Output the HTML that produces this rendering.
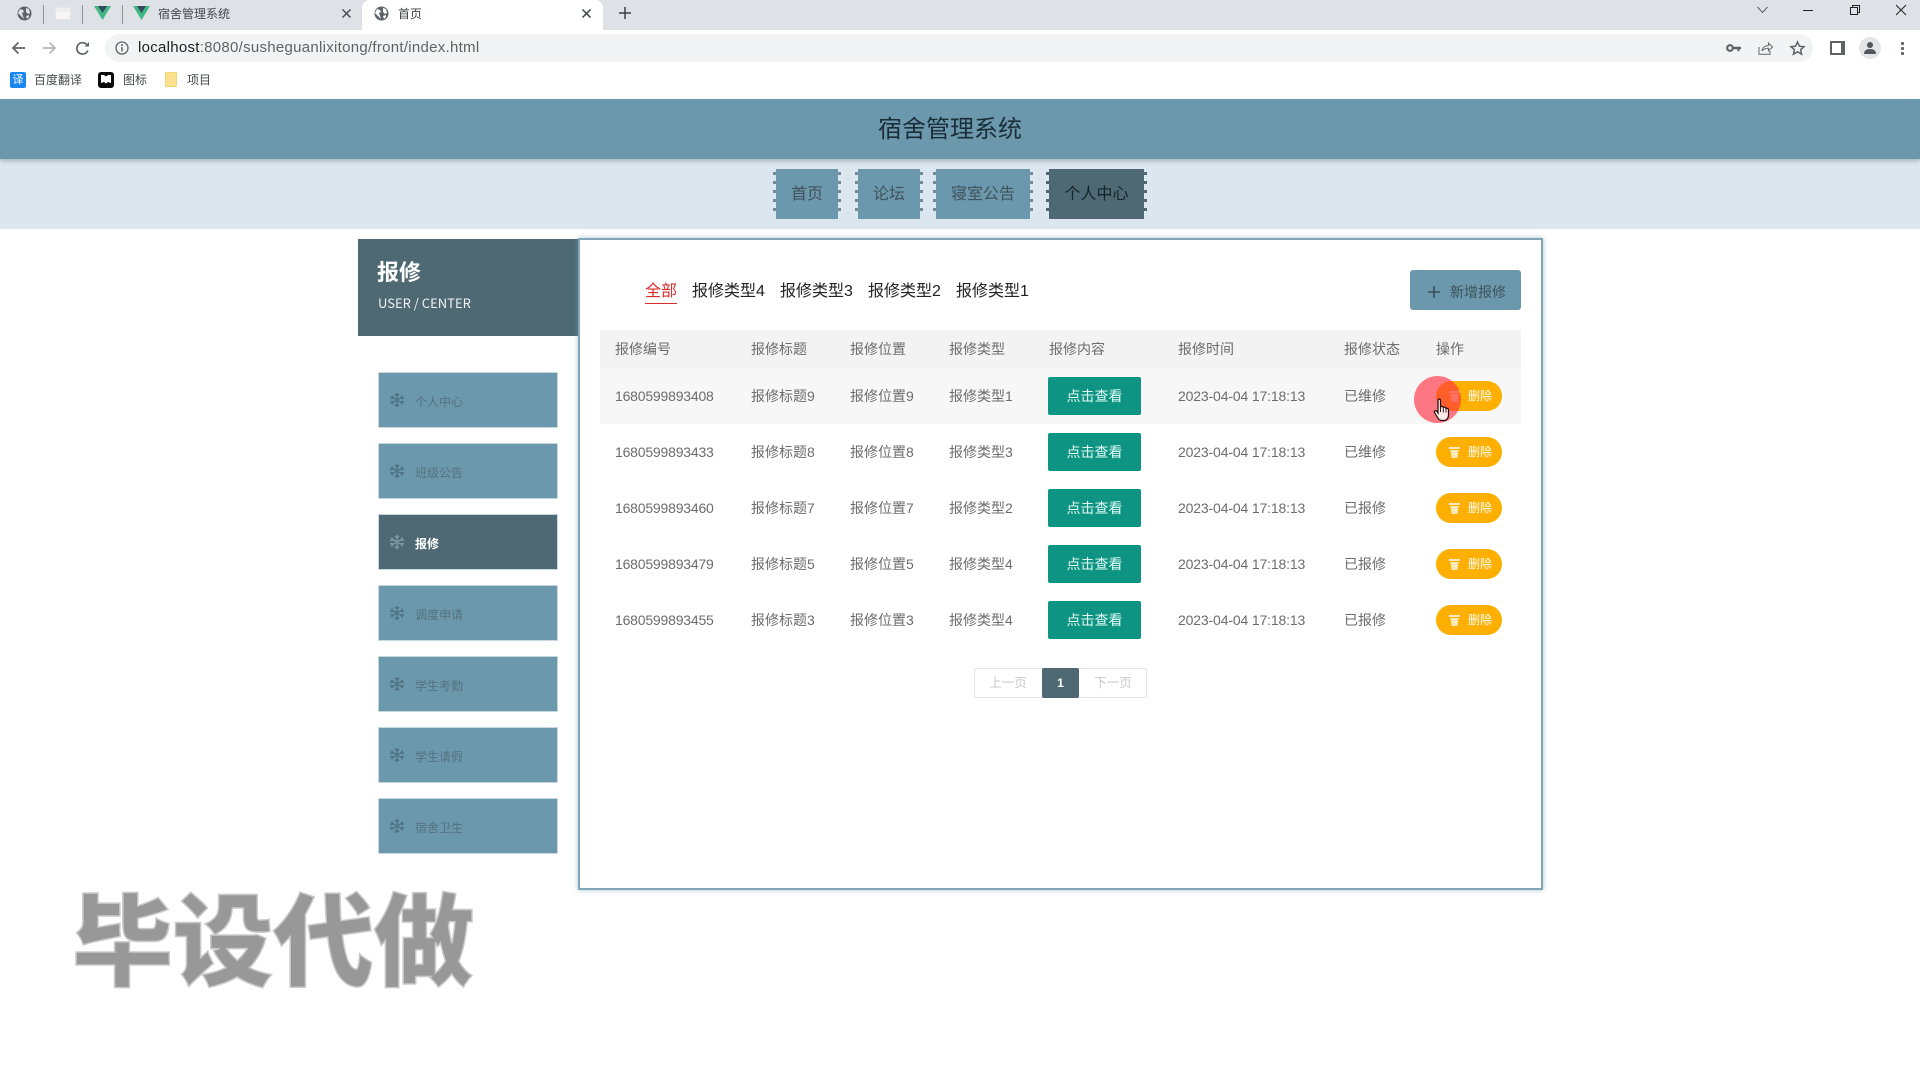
<!DOCTYPE html>
<html lang="zh"><head><meta charset="utf-8"><title>首页</title>
<style>
*{box-sizing:border-box;margin:0;padding:0}
html,body{width:1920px;height:1072px;overflow:hidden;background:#fff}
body{position:relative;font-family:"Liberation Sans","Noto Sans CJK SC",sans-serif;color:#666}
.a{position:absolute;white-space:nowrap}
svg{position:absolute;overflow:visible}
.sep{position:absolute;top:5px;width:1px;height:19px;background:#8f9398}
.nav{position:absolute;top:169px;height:50px;background:#6b98ac;color:#3f525c;font-size:16px;line-height:51px;text-align:center}
.nav:before,.nav:after{content:"";position:absolute;top:3px;width:3px;height:44px;background:repeating-linear-gradient(to bottom,#6f8c99 0 3px,transparent 3px 9px)}
.nav:before{left:-3px}.nav:after{right:-3px}
.nav.on{background:#4e6973;color:#15242c}
.nav.on:before,.nav.on:after{background:repeating-linear-gradient(to bottom,#4e6973 0 3px,transparent 3px 9px)}
.mi{position:absolute;left:378px;width:180px;height:56px;background:#6b98ac;border:1px solid #c8d8e0;color:#557280;font-size:12px}
.mi b{position:absolute;left:36px;top:20px;font-weight:400;line-height:18px}
.mi.on{background:#4e6973;color:#fff}.mi.on b{font-weight:700}
.mi svg{left:11px;top:20px}
.r{position:absolute;left:600px;width:921px;height:56px;font-size:14px;color:#6c6c6c}
.r span{position:absolute;top:19px;line-height:18px;white-space:nowrap}
.r .id{left:15px;letter-spacing:-.2px}.r .t{left:151px}.r .p{left:250px}.r .k{left:349px}.r .d{left:578px;letter-spacing:-.15px}.r .s{left:744px}
.r .v{left:448px;top:9px;width:93px;height:38px;background:#0d9483;border-radius:2px;color:#e4fbf4;line-height:38px;text-align:center}
.r .x{left:836px;top:13px;width:66px;height:30px;background:#ffaf00;border-radius:15px;color:#fff;font-size:12px;line-height:31px;padding-left:32px}
.r svg{left:849px;top:23px}
.h{position:absolute;top:340px;font-size:14px;color:#6c6c6c;line-height:18px}
.tb{position:absolute;top:280px;font-size:16px;color:#222;line-height:23px}
</style></head><body>

<!-- tab strip -->
<div class="a" style="left:0;top:0;width:1920px;height:30px;background:#dee1e6"></div>
<div class="a" style="left:362px;top:0;width:241px;height:30px;background:#fff;border-radius:8px 8px 0 0"></div>
<svg style="left:17px;top:6px" width="15" height="15" viewBox="0 0 15 15"><circle cx="7.500" cy="7.500" r="7" fill="#5f6368"/><path d="M3 3l3 1 1 2-2 1 1 3 1 3-3-3-3-3zM9 2l3 1 1 4-2 1-2-2zM9 10l3-1 0 2-2 2z" fill="#dee1e6"/></svg>
<div class="sep" style="left:43px"></div>
<div class="a" style="left:55px;top:7px;width:16px;height:13px;background:linear-gradient(#eceef0 0 4px,#f5f5f5 4px);border:1px solid #e4e6ea"></div>
<div class="sep" style="left:82px"></div>
<svg style="left:94px;top:6px" width="17" height="14" viewBox="0 0 17 14"><path d="M0 0h17L8.500 14z" fill="#41b883"/><path d="M4 0h9L8.500 7z" fill="#35495e"/></svg>
<div class="sep" style="left:122px"></div>
<svg style="left:133px;top:6px" width="17" height="14" viewBox="0 0 17 14"><path d="M0 0h17L8.500 14z" fill="#41b883"/><path d="M4 0h9L8.500 7z" fill="#35495e"/></svg>
<div class="a" style="left:158px;top:5px;font-size:12px;line-height:18px;color:#45484c">宿舍管理系统</div>
<svg style="left:342px;top:9px" width="9" height="9" viewBox="0 0 9 9"><path d="M.5.500l8 8M8.500.500l-8 8" stroke="#4a4d51" stroke-width="1.500"/></svg>
<svg style="left:374px;top:6px" width="15" height="15" viewBox="0 0 15 15"><circle cx="7.500" cy="7.500" r="7" fill="#5f6368"/><path d="M3 3l3 1 1 2-2 1 1 3 1 3-3-3-3-3zM9 2l3 1 1 4-2 1-2-2zM9 10l3-1 0 2-2 2z" fill="#fff"/></svg>
<div class="a" style="left:398px;top:5px;font-size:12px;line-height:18px;color:#3c4043">首页</div>
<svg style="left:582px;top:9px" width="9" height="9" viewBox="0 0 9 9"><path d="M.5.500l8 8M8.500.500l-8 8" stroke="#3c4043" stroke-width="1.500"/></svg>
<svg style="left:619px;top:7px" width="12" height="12" viewBox="0 0 12 12"><path d="M6 0v12M0 6h12" stroke="#3c4043" stroke-width="1.500"/></svg>
<svg style="left:1757px;top:6px" width="11" height="8" viewBox="0 0 11 8"><path d="M.5 1l5 5.500L10.500 1" fill="none" stroke="#5a5e63" stroke-width="1"/></svg>
<div class="a" style="left:1803px;top:10px;width:10px;height:1px;background:#222"></div>
<svg style="left:1850px;top:5px" width="10" height="10" viewBox="0 0 10 10"><path d="M.5 2.500h7v7h-7zM2.500 2.500V.5h7v7h-2" fill="none" stroke="#222"/></svg>
<svg style="left:1896px;top:5px" width="10" height="10" viewBox="0 0 10 10"><path d="M0 0l10 10M10 0L0 10" stroke="#222"/></svg>

<!-- toolbar -->
<svg style="left:11px;top:41px" width="14" height="14" viewBox="0 0 14 14"><path d="M14 7H2M7.500 1.500L2 7l5.500 5.500" fill="none" stroke="#5f6368" stroke-width="1.700"/></svg>
<svg style="left:43px;top:41px" width="14" height="14" viewBox="0 0 14 14"><path d="M0 7h12M6.500 1.500L12 7l-5.500 5.500" fill="none" stroke="#b6b8bb" stroke-width="1.700"/></svg>
<svg style="left:75px;top:41px" width="15" height="15" viewBox="0 0 15 15"><path d="M12.800 9.500A5.700 5.700 0 1 1 11.500 3.300" fill="none" stroke="#5f6368" stroke-width="1.700"/><path d="M9.500 5.500H14V1z" fill="#5f6368"/></svg>
<div class="a" style="left:105px;top:34px;width:1708px;height:28px;background:#f1f3f4;border-radius:14px"></div>
<svg style="left:115px;top:41px" width="14" height="14" viewBox="0 0 14 14"><circle cx="7" cy="7" r="6" fill="none" stroke="#5f6368" stroke-width="1.300"/><path d="M7 6v4.500" stroke="#5f6368" stroke-width="1.500"/><circle cx="7" cy="4" r="1" fill="#5f6368"/></svg>
<div class="a" style="left:138px;top:38px;font-size:15px;letter-spacing:.28px;line-height:20px;color:#5f6368"><span style="color:#202124">localhost</span>:8080/susheguanlixitong/front/index.html</div>
<svg style="left:1726px;top:43px" width="15" height="10" viewBox="0 0 15 10"><circle cx="4" cy="5" r="2.800" fill="none" stroke="#5f6368" stroke-width="2.200"/><path d="M6 3.800h9v2.500h-1.500v2h-2v-2H6z" fill="#5f6368"/></svg>
<svg style="left:1758px;top:41px" width="15" height="14" viewBox="0 0 15 14"><path d="M1 6v7.300h11V10" fill="none" stroke="#6f7276" stroke-width="1.100"/><path d="M4 10c.5-3.500 3-5.500 6.500-5.500V2l4 4-4 3.800V7.300C8 7.300 5.500 8 4 10z" fill="none" stroke="#6f7276" stroke-width="1.100"/></svg>
<svg style="left:1790px;top:41px" width="15" height="14" viewBox="0 0 15 14"><path d="M7.500 1l1.900 4.200 4.600.5-3.400 3 1 4.500-4.100-2.400-4.100 2.400 1-4.500-3.400-3 4.600-.5z" fill="none" stroke="#5f6368" stroke-width="1.500"/></svg>
<div class="a" style="left:1830px;top:41px;width:15px;height:14px;background:linear-gradient(to right,#fff 0 9px,#5f6368 9px);border:2px solid #5f6368"></div>
<div class="a" style="left:1859px;top:37px;width:22px;height:22px;border-radius:50%;background:#e3e5e8"></div>
<svg style="left:1863px;top:42px" width="14" height="12" viewBox="0 0 14 12"><circle cx="7" cy="3" r="3" fill="#52565c"/><path d="M1 12c0-3.500 2.500-5 6-5s6 1.500 6 5z" fill="#52565c"/></svg>
<div class="a" style="left:1901px;top:42px;width:3px;height:13px;background:radial-gradient(circle at 1.500px 1.500px,#5f6368 1.500px,transparent 1.600px) 0 0/3px 5px"></div>

<!-- bookmarks -->
<div class="a" style="left:10px;top:72px;width:16px;height:16px;background:#1a87f0;border-radius:2px;color:#fff;font-size:11px;line-height:16px;text-align:center">译</div>
<div class="a" style="left:34px;top:71px;font-size:12px;line-height:18px;color:#45484c">百度翻译</div>
<div class="a" style="left:98px;top:72px;width:16px;height:16px;background:#0a0a0a;border-radius:3px"></div>
<svg style="left:101px;top:75px" width="10" height="10" viewBox="0 0 10 10"><path d="M0 0h3l2 1.500L7 0h3v8L7 7 5 8.500 3 7 0 8z" fill="#fff"/></svg>
<div class="a" style="left:123px;top:71px;font-size:12px;line-height:18px;color:#45484c">图标</div>
<div class="a" style="left:165px;top:72px;width:12px;height:15px;background:#fbe08d;border:1px solid #f4d57a;border-radius:1px"></div>
<div class="a" style="left:187px;top:71px;font-size:12px;line-height:18px;color:#45484c">项目</div>

<!-- header -->
<div class="a" style="left:0;top:99px;width:1920px;height:60px;background:#6b98ac;box-shadow:0 2px 4px rgba(60,90,110,.35);z-index:2"></div>
<div class="a" style="left:878px;top:100px;z-index:3;font-size:24px;line-height:60px;color:#1b2d38">宿舍管理系统</div>
<div class="a" style="left:0;top:159px;width:1920px;height:70px;background:#dbe6ef"></div>
<div class="nav" style="left:776px;width:62px">首页</div>
<div class="nav" style="left:858px;width:62px">论坛</div>
<div class="nav" style="left:936px;width:94px">寝室公告</div>
<div class="nav on" style="left:1049px;width:95px">个人中心</div>

<!-- sidebar -->
<div class="a" style="left:358px;top:239px;width:221px;height:97px;background:#4e6973"></div>
<div class="a" style="left:377px;top:258px;font-size:22px;font-weight:700;line-height:30px;color:#fff">报修</div>
<div class="a" style="left:378px;top:293px;font-family:'Noto Sans CJK SC',sans-serif;font-size:13px;line-height:20px;color:#f0f4f5">USER / CENTER</div>

<div class="mi" style="top:372px"><svg width="14" height="14" viewBox="0 0 14 14"><path d="M7 0v14M1 3.500l12 7M13 3.500l-12 7M5 1l2 2 2-2M5 13l2-2 2 2M0 5.500l2.700-.3L2 2.500M14 5.500l-2.700-.3.700-2.700M0 8.500l2.700.3-.7 2.700M14 8.500l-2.700.3.700 2.700" fill="none" stroke="#4f7485" stroke-width="1.400"/></svg><b>个人中心</b></div>
<div class="mi" style="top:443px"><svg width="14" height="14" viewBox="0 0 14 14"><path d="M7 0v14M1 3.500l12 7M13 3.500l-12 7M5 1l2 2 2-2M5 13l2-2 2 2M0 5.500l2.700-.3L2 2.500M14 5.500l-2.700-.3.700-2.700M0 8.500l2.700.3-.7 2.700M14 8.500l-2.700.3.700 2.700" fill="none" stroke="#4f7485" stroke-width="1.400"/></svg><b>班级公告</b></div>
<div class="mi on" style="top:514px"><svg width="14" height="14" viewBox="0 0 14 14"><path d="M7 0v14M1 3.500l12 7M13 3.500l-12 7M5 1l2 2 2-2M5 13l2-2 2 2M0 5.500l2.700-.3L2 2.500M14 5.500l-2.700-.3.700-2.700M0 8.500l2.700.3-.7 2.700M14 8.500l-2.700.3.700 2.700" fill="none" stroke="#7d98a3" stroke-width="1.400"/></svg><b>报修</b></div>
<div class="mi" style="top:585px"><svg width="14" height="14" viewBox="0 0 14 14"><path d="M7 0v14M1 3.500l12 7M13 3.500l-12 7M5 1l2 2 2-2M5 13l2-2 2 2M0 5.500l2.700-.3L2 2.500M14 5.500l-2.700-.3.700-2.700M0 8.500l2.700.3-.7 2.700M14 8.500l-2.700.3.700 2.700" fill="none" stroke="#4f7485" stroke-width="1.400"/></svg><b>调度申请</b></div>
<div class="mi" style="top:656px"><svg width="14" height="14" viewBox="0 0 14 14"><path d="M7 0v14M1 3.500l12 7M13 3.500l-12 7M5 1l2 2 2-2M5 13l2-2 2 2M0 5.500l2.700-.3L2 2.500M14 5.500l-2.700-.3.700-2.700M0 8.500l2.700.3-.7 2.700M14 8.500l-2.700.3.700 2.700" fill="none" stroke="#4f7485" stroke-width="1.400"/></svg><b>学生考勤</b></div>
<div class="mi" style="top:727px"><svg width="14" height="14" viewBox="0 0 14 14"><path d="M7 0v14M1 3.500l12 7M13 3.500l-12 7M5 1l2 2 2-2M5 13l2-2 2 2M0 5.500l2.700-.3L2 2.500M14 5.500l-2.700-.3.700-2.700M0 8.500l2.700.3-.7 2.700M14 8.500l-2.700.3.700 2.700" fill="none" stroke="#4f7485" stroke-width="1.400"/></svg><b>学生请假</b></div>
<div class="mi" style="top:798px"><svg width="14" height="14" viewBox="0 0 14 14"><path d="M7 0v14M1 3.500l12 7M13 3.500l-12 7M5 1l2 2 2-2M5 13l2-2 2 2M0 5.500l2.700-.3L2 2.500M14 5.500l-2.700-.3.700-2.700M0 8.500l2.700.3-.7 2.700M14 8.500l-2.700.3.700 2.700" fill="none" stroke="#4f7485" stroke-width="1.400"/></svg><b>宿舍卫生</b></div>

<!-- main panel -->
<div class="a" style="left:578px;top:238px;width:965px;height:652px;background:#fff;border:2px solid #7fa5b6;box-shadow:0 0 5px rgba(100,150,180,.55)"></div>

<div class="tb" style="left:645px;color:#d92b2b;border-bottom:1px solid #d92b2b;height:24px">全部</div>
<div class="tb" style="left:692px">报修类型4</div>
<div class="tb" style="left:780px">报修类型3</div>
<div class="tb" style="left:868px">报修类型2</div>
<div class="tb" style="left:956px">报修类型1</div>

<div class="a" style="left:1410px;top:270px;width:111px;height:40px;background:#6b98ac;border-radius:3px;color:#3d525d;font-size:14px;line-height:44px;padding-left:40px">新增报修</div>
<svg style="left:1428px;top:286px" width="12" height="12" viewBox="0 0 12 12"><path d="M6 0v12M0 6h12" stroke="#2f424c" stroke-width="1.300"/></svg>

<div class="a" style="left:600px;top:330px;width:921px;height:38px;background:#f3f3f4"></div>
<div class="h" style="left:615px">报修编号</div>
<div class="h" style="left:751px">报修标题</div>
<div class="h" style="left:850px">报修位置</div>
<div class="h" style="left:949px">报修类型</div>
<div class="h" style="left:1049px">报修内容</div>
<div class="h" style="left:1178px">报修时间</div>
<div class="h" style="left:1344px">报修状态</div>
<div class="h" style="left:1436px">操作</div>

<div class="r" style="top:368px;background:#f7f7f8"><span class="id">1680599893408</span><span class="t">报修标题9</span><span class="p">报修位置9</span><span class="k">报修类型1</span><span class="v">点击查看</span><span class="d">2023-04-04 17:18:13</span><span class="s">已维修</span><span class="x">删除</span><svg width="11" height="11" viewBox="0 0 11 11"><path d="M0 0h11v2H0zM1.500 3h8l-1 8h-6z" fill="#ffe9b8"/></svg></div>
<div class="r" style="top:424px"><span class="id">1680599893433</span><span class="t">报修标题8</span><span class="p">报修位置8</span><span class="k">报修类型3</span><span class="v">点击查看</span><span class="d">2023-04-04 17:18:13</span><span class="s">已维修</span><span class="x">删除</span><svg width="11" height="11" viewBox="0 0 11 11"><path d="M0 0h11v2H0zM1.500 3h8l-1 8h-6z" fill="#ffe9b8"/></svg></div>
<div class="r" style="top:480px"><span class="id">1680599893460</span><span class="t">报修标题7</span><span class="p">报修位置7</span><span class="k">报修类型2</span><span class="v">点击查看</span><span class="d">2023-04-04 17:18:13</span><span class="s">已报修</span><span class="x">删除</span><svg width="11" height="11" viewBox="0 0 11 11"><path d="M0 0h11v2H0zM1.500 3h8l-1 8h-6z" fill="#ffe9b8"/></svg></div>
<div class="r" style="top:536px"><span class="id">1680599893479</span><span class="t">报修标题5</span><span class="p">报修位置5</span><span class="k">报修类型4</span><span class="v">点击查看</span><span class="d">2023-04-04 17:18:13</span><span class="s">已报修</span><span class="x">删除</span><svg width="11" height="11" viewBox="0 0 11 11"><path d="M0 0h11v2H0zM1.500 3h8l-1 8h-6z" fill="#ffe9b8"/></svg></div>
<div class="r" style="top:592px"><span class="id">1680599893455</span><span class="t">报修标题3</span><span class="p">报修位置3</span><span class="k">报修类型4</span><span class="v">点击查看</span><span class="d">2023-04-04 17:18:13</span><span class="s">已报修</span><span class="x">删除</span><svg width="11" height="11" viewBox="0 0 11 11"><path d="M0 0h11v2H0zM1.500 3h8l-1 8h-6z" fill="#ffe9b8"/></svg></div>

<!-- pagination -->
<div class="a" style="left:974px;top:668px;width:173px;height:30px;border:1px solid #e3e5e7;border-radius:2px"></div>
<div class="a" style="left:974px;top:669px;width:68px;height:29px;font-size:12.500px;line-height:29px;text-align:center;color:#c8c9cb">上一页</div>
<div class="a" style="left:1042px;top:668px;width:37px;height:30px;background:#4e6973;border-radius:2px;font-size:12px;font-weight:700;line-height:30px;text-align:center;color:#fff">1</div>
<div class="a" style="left:1079px;top:669px;width:68px;height:29px;font-size:12.500px;line-height:29px;text-align:center;color:#c8c9cb">下一页</div>

<!-- click highlight + cursor -->
<div class="a" style="left:1414px;top:376px;width:47px;height:47px;border-radius:50%;background:rgba(255,50,65,.65)"></div>
<svg style="left:1433px;top:398px" width="19" height="24" viewBox="0 0 19 24"><path d="M5 2c1-1.500 2.500-1 2.500.5V9c1-1 2.500-.7 2.800.5 1-.8 2.500-.4 2.700 1 1.200-.6 2.500 0 2.500 1.500v5c0 3-1.800 5.500-4.500 5.500H8.500c-2 0-3-1.200-4-3L1.500 14.500c-.8-1.400 1.300-2.600 2.300-1.300L5 15z" fill="#ffeaea" stroke="#1a0808" stroke-width="1.200"/><path d="M7.500 9v5M10.300 9.500v5M13 10.500v4" stroke="#1a0808" stroke-width=".9"/></svg>

<!-- watermark -->
<div class="a" style="left:72px;top:869px;font-family:'Noto Sans CJK SC','WenQuanYi Zen Hei',sans-serif;font-size:101px;font-weight:900;line-height:132px;letter-spacing:-.5px;color:#989898;-webkit-text-stroke:1.500px #c9c9c9">毕设代做</div>
</body></html>
